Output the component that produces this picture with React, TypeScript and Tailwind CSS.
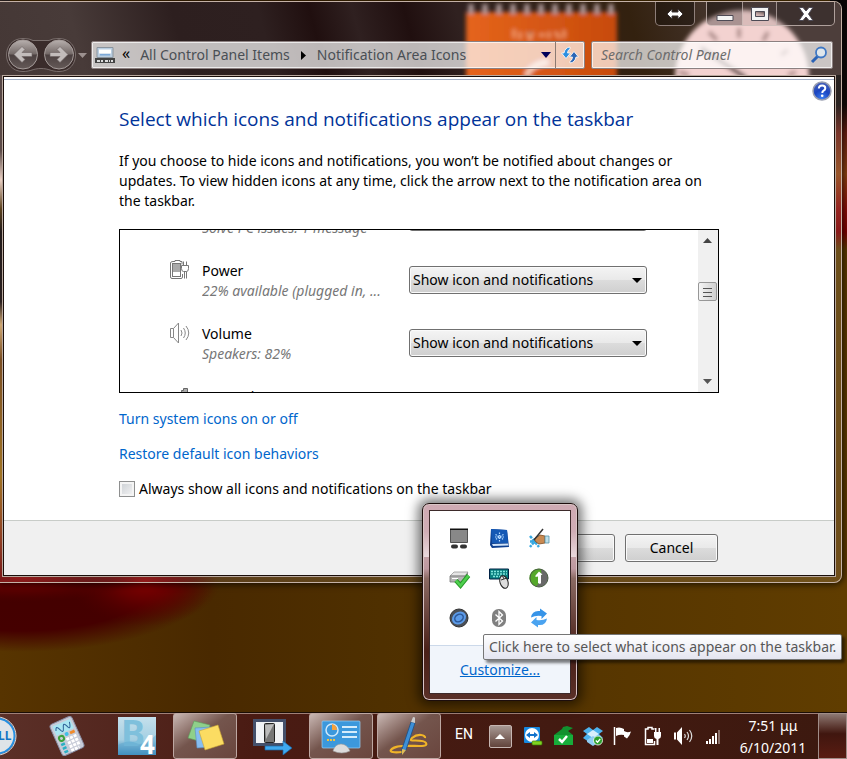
import React, { useState } from 'react'

interface IconRowProps {
    id: string
    name?: string
    status?: string
    icon?: React.ReactNode
}

const PowerIcon = () => (
    <svg width="22" height="22" viewBox="0 0 22 22" fill="none" aria-hidden="true">
        <path d="M4 2.500h2v-1h5v1h2v3M1.500 4q0-1.500 2.500-1.500M1.500 4v14q0 1.500 1.500 1.500h9q1.500 0 1.500-1.500v-3" stroke="#777" />
        <rect x="3.500" y="4.500" width="8" height="13" stroke="#777" fill="#fff" />
        <rect x="4" y="5" width="7" height="8" fill="#aaa" />
        <path d="M12.500 6.500h7v3q0 3-2 3h-3q-2 0-2-3zM14.500 6V2.500M17.500 6V2.500M15.500 12.500v7M17.500 12.500v7" stroke="#777" fill="#fff" />
    </svg>
)

const VolumeIcon = () => (
    <svg width="22" height="22" viewBox="0 0 22 22" fill="none" stroke="#888" aria-hidden="true">
        <path d="M1.500 6.500h3v9h-3zM4.500 6.500l5-5.500v20l-5-5.500" />
        <path d="M12 8q2 3 0 6M14.500 6q3.500 5 0 10M17 4q5.500 7 0 14" />
    </svg>
)

const NetworkIcon = () => (
    <svg width="22" height="22" viewBox="0 0 22 22" fill="#aaa" stroke="#666" aria-hidden="true">
        <path d="M1.500 15.500h3v5h-3zM5.500 11.500h3v9h-3zM9.500 7.500h3v13h-3zM12.500 5.500h2v-2h4v17h-4z" />
    </svg>
)

const rows: IconRowProps[] = [
    { id: 'action-center', status: 'Solve PC issues: 1 message' },
    { id: 'power', name: 'Power', status: '22% available (plugged in, ...', icon: <PowerIcon /> },
    { id: 'volume', name: 'Volume', status: 'Speakers: 82%', icon: <VolumeIcon /> },
    { id: 'network', name: 'Network', icon: <NetworkIcon /> },
]

const IconRow = ({ id, name, status, icon }: IconRowProps) => {
    return (
        <li className="flex h-[63px] shrink-0 items-start pl-[49px]">
            <div className="w-[33px] pt-2.5">{icon}</div>
            <div className="min-w-0 flex-1 pt-3 leading-5">
                <label htmlFor={id} className="block min-h-5 text-black">{name}</label>
                {status && <p className="truncate text-[#777] italic">{status}</p>}
            </div>
            <div className="relative mt-[17px] mr-[51px] w-[238px]">
                <select id={id} aria-label={name ?? status} className="h-7 w-full appearance-none rounded-[3px] border border-[#707070] bg-[linear-gradient(#f4f4f4,#e9e9e9_50%,#dcdcdc_50%,#cfcfcf)] pl-[3px] text-black shadow-[inset_0_0_0_1px_#fafafa]">
                    <option>Show icon and notifications</option>
                    <option>Hide icon and notifications</option>
                    <option>Only show notifications</option>
                </select>
                <svg className="pointer-events-none absolute top-3 right-[5px]" width="10" height="5" viewBox="0 0 10 5" aria-hidden="true">
                    <path d="M0 0h10L5 5z" fill="#000" />
                </svg>
            </div>
        </li>
    )
}

/* desktop wallpaper, it also tints the glass frame of the window */
const Wallpaper = () => (
    <svg className="pointer-events-none absolute inset-0 h-full w-full" viewBox="0 0 847 759" preserveAspectRatio="none" aria-hidden="true">
        <defs>
            <linearGradient id="ground" x1="0" y1="0" x2="1" y2="0">
                <stop offset="0" stopColor="#573400" />
                <stop offset=".25" stopColor="#492900" />
                <stop offset=".45" stopColor="#4f3000" />
                <stop offset="1" stopColor="#603d00" />
            </linearGradient>
            <linearGradient id="leftEdge" x1="0" y1="0" x2="0" y2="1">
                <stop offset="0" stopColor="#3c2e2c" />
                <stop offset=".26" stopColor="#4a3734" />
                <stop offset=".31" stopColor="#e8cbbd" />
                <stop offset=".36" stopColor="#4a2d05" />
                <stop offset=".4" stopColor="#0a0202" />
                <stop offset=".52" stopColor="#120606" />
                <stop offset=".56" stopColor="#c99d62" />
                <stop offset=".62" stopColor="#6b3a0a" />
                <stop offset=".82" stopColor="#95630b" />
                <stop offset=".93" stopColor="#83290c" />
                <stop offset="1" stopColor="#6a0000" />
            </linearGradient>
            <linearGradient id="rightEdge" x1="0" y1="0" x2="0" y2="1">
                <stop offset="0" stopColor="#0a0606" />
                <stop offset=".18" stopColor="#120a08" />
                <stop offset=".23" stopColor="#6a1e12" />
                <stop offset=".3" stopColor="#8d4312" />
                <stop offset=".36" stopColor="#8a0d08" />
                <stop offset=".4" stopColor="#7c0000" />
                <stop offset=".43" stopColor="#5c3a00" />
                <stop offset="1" stopColor="#5e3900" />
            </linearGradient>
            <radialGradient id="redGlow">
                <stop offset="0" stopColor="#850000" />
                <stop offset=".4" stopColor="#6c0000" stopOpacity=".8" />
                <stop offset="1" stopColor="#500000" stopOpacity="0" />
            </radialGradient>
            <radialGradient id="darkRed">
                <stop offset="0" stopColor="#430000" />
                <stop offset=".7" stopColor="#450000" />
                <stop offset="1" stopColor="#450000" stopOpacity="0" />
            </radialGradient>
        </defs>
        <rect width="847" height="759" fill="url(#ground)" />
        <ellipse cx="20" cy="582" rx="195" ry="70" fill="url(#darkRed)" />
        <ellipse cx="145" cy="582" rx="75" ry="44" fill="url(#redGlow)" />
        <ellipse cx="20" cy="578" rx="120" ry="24" fill="url(#redGlow)" />
        <rect width="10" height="580" fill="url(#leftEdge)" />
        <rect x="830" width="17" height="580" fill="url(#rightEdge)" />
    </svg>
)

/* blurred gadgets seen through the glass of the title bar */
const GlassBackdrop = () => (
    <svg className="pointer-events-none absolute top-0 right-0" width="842" height="73" viewBox="0 0 842 73" aria-hidden="true">
        <defs>
            <filter id="soft"><feGaussianBlur stdDeviation="2" /></filter>
            <linearGradient id="orange" x1="0" y1="0" x2="1" y2="0">
                <stop offset="0" stopColor="#e5641c" />
                <stop offset="1" stopColor="#c74a0c" />
            </linearGradient>
        </defs>
        <g filter="url(#soft)">
            <rect x="467" y="10" width="151" height="75" fill="url(#orange)" />
            <path d="M472 2v10M486 2v10M500 2v10M514 2v10M528 2v10M542 2v10M556 2v10M570 2v10M584 2v10M598 2v10M612 2v10" stroke="#b5a0a0" strokeWidth="5" />
            <path d="M527 74q6-12 22-14" stroke="#f5cdb8" strokeWidth="5" fill="none" />
            <path d="M515 27v9M521 30v7M528 30l3 7 3-7M540 33h6M550 30v6M556 30l5 6M565 28v8" stroke="#f09a6c" strokeWidth="3" />
        </g>
        <g filter="url(#soft)">
            <circle cx="743" cy="75" r="67" fill="#f3d2d0" />
            <path d="M710 30l8 8M740 26v10M769 30l-5 9M789 48l-7 5M680 70l10 3M797 70l-8 3" stroke="#a98886" strokeWidth="4" />
            <path d="M702 46l45 30" stroke="#4c3432" strokeWidth="4" />
        </g>
    </svg>
)

const WindowButtons = () => (
    <div className="relative flex h-6 justify-end gap-[11px]">
        <button type="button" aria-label="Resize" className="flex w-10 items-center justify-center rounded-b-[5px] border border-t-0 border-[#b9a9a6]/70 bg-black/30">
            <svg width="18" height="12" viewBox="0 0 18 12" aria-hidden="true">
                <path d="M1 6l5-5v3h6V1l5 5-5 5V8H6v3z" fill="#fff" stroke="#3a3334" />
            </svg>
        </button>
        <div className="flex overflow-hidden rounded-b-[5px] border border-t-0 border-[#c9b9b6]/80">
            <button type="button" aria-label="Minimize" className="flex w-[35px] items-end justify-center bg-black/30 pb-1">
                <svg width="18" height="6" viewBox="0 0 18 6" aria-hidden="true">
                    <path d="M1 .5h16v5H1z" fill="#f4f4f4" stroke="#4d4a55" />
                </svg>
            </button>
            <button type="button" aria-label="Maximize" className="flex w-[34px] items-center justify-center border-l border-[#c9b9b6]/70 bg-black/10">
                <svg width="18" height="14" viewBox="0 0 18 14" aria-hidden="true">
                    <path fillRule="evenodd" d="M.5.5h17v13H.5zM4.500 4.500v5h9v-5z" fill="#f4f4f4" stroke="#4d4a55" />
                </svg>
            </button>
            <button type="button" aria-label="Close" className="flex w-[58px] items-center justify-center border-l border-[#c9b9b6]/70 bg-black/20">
                <svg width="16" height="14" viewBox="0 0 16 14" aria-hidden="true">
                    <path d="M1 .5h4L8 4l3-3.500h4L10.500 7l4.500 6.500h-4L8 10l-3 3.500H1L5.500 7z" fill="#fff" stroke="#4d4a55" />
                </svg>
            </button>
        </div>
    </div>
)

const NavArrows = () => (
    <div className="-my-1 flex w-[91px] shrink-0 items-center pl-1.5">
        <button type="button" aria-label="Back and forward">
            <svg width="70" height="36" viewBox="0 0 70 36" aria-hidden="true">
                <defs>
                    <linearGradient id="orb" x1="0" y1="0" x2="0" y2="1">
                        <stop offset="0" stopColor="#b8b0ae" />
                        <stop offset=".48" stopColor="#746a68" />
                        <stop offset=".52" stopColor="#4b4040" />
                        <stop offset="1" stopColor="#655a58" />
                    </linearGradient>
                </defs>
                <path d="M17 1.500q7 0 10 2h16q3-2 10-2c22 0 22 33 0 33-8 0-10-3-18-3s-10 3-18 3c-22 0-22-33 0-33z" fill="#3a2c2b" stroke="#7a6f6d" />
                <circle cx="17" cy="17.500" r="14.500" fill="url(#orb)" stroke="#a59c9a" />
                <circle cx="53" cy="17.500" r="14.500" fill="url(#orb)" stroke="#a59c9a" />
                <path d="M8 17.500l8-8 3 3-3 3H26v4H16l3 3-3 3zM62 17.500l-8-8-3 3 3 3H44v4h10l-3 3 3 3z" fill="#c2bcbb" stroke="#6a605f" strokeWidth=".6" />
            </svg>
        </button>
        <svg className="ml-0.5" width="9" height="5" viewBox="0 0 9 5" aria-hidden="true">
            <path d="M0 0h9L4.500 5z" fill="#9c918f" />
        </svg>
    </div>
)

const AddressBar = () => (
    <div className="flex h-7 min-w-0 flex-1 items-stretch rounded-[2px] border border-[#8c8080] bg-white/70 text-[#4a4f55] shadow-[inset_0_0_0_1px_#ffffffb0]">
        <div className="flex min-w-0 flex-1 items-center pl-0.5">
            <svg width="22" height="18" viewBox="0 0 22 18" className="shrink-0" aria-hidden="true">
                <path d="M3 1.500h16v10H3z" fill="#b9cde0" stroke="#8a949e" />
                <path d="M5 3.500h12v4H5z" fill="#fff" />
                <path d="M6 8h10v1.500H6z" fill="#7da9d8" />
                <path d="M1 12h20v5H1z" fill="#444" />
                <path d="M3 14h3v2H3zM7 14h2v2H7zM11 14h3v2h-3zM15 14h1v2h-1zM17 14h2v2h-2z" fill="#ddd" />
            </svg>
            <span className="ml-1.5 pb-1 text-base leading-5 text-black">«</span>
            <a href="#items" className="ml-2.5 truncate">All Control Panel Items</a>
            <svg width="5" height="9" viewBox="0 0 5 9" className="mx-[11px] shrink-0" aria-hidden="true">
                <path d="M0 0l5 4.500L0 9z" fill="#000" />
            </svg>
            <a href="#icons" className="truncate">Notification Area Icons</a>
            <button type="button" aria-label="Previous locations" className="mr-1 ml-auto">
                <svg width="10" height="6" viewBox="0 0 10 6" aria-hidden="true">
                    <path d="M0 0h10L5 6z" fill="#00005a" />
                </svg>
            </button>
        </div>
        <button type="button" aria-label="Refresh" className="flex w-[29px] items-center justify-center border-l border-[#8c7a72]">
            <svg width="18" height="18" viewBox="0 0 18 18" strokeWidth=".8" stroke="#fff" aria-hidden="true">
                <path d="M9 1q-5 .5-6 6H.5L5 12.500 9.500 7H6.500Q6.500 4 9 3z" fill="#2e8fe0" />
                <path d="M9 17q5-.5 6-6h2.500L13 5.500 8.500 11h3q0 3-2.500 4z" fill="#2a66b5" />
            </svg>
        </button>
    </div>
)

const HelpButton = () => (
    <button type="button" aria-label="Help">
        <svg width="20" height="20" viewBox="0 0 20 20" aria-hidden="true">
            <defs>
                <radialGradient id="help" cx=".5" cy=".9" r=".9">
                    <stop offset="0" stopColor="#3d7ff0" />
                    <stop offset=".5" stopColor="#1a44c0" />
                    <stop offset="1" stopColor="#4a63b8" />
                </radialGradient>
            </defs>
            <circle cx="10" cy="10" r="9" fill="url(#help)" stroke="#9a9fb0" strokeWidth="1.500" />
            <path d="M6.800 7.500q.2-3 3.300-3 3.200 0 3.200 2.700 0 1.500-1.700 2.500-1.300.8-1.300 2.300" stroke="#fff" strokeWidth="2" fill="none" />
            <circle cx="10.200" cy="14.800" r="1.300" fill="#fff" />
        </svg>
    </button>
)

const ScrollBar = () => (
    <div className="flex w-5 shrink-0 flex-col items-start bg-[#f0f0f0]">
        <button type="button" aria-label="Scroll up" className="flex h-5 w-[19px] items-center justify-center">
            <svg width="9" height="5" viewBox="0 0 9 5" aria-hidden="true"><path d="M4.500 0L9 5H0z" fill="#444" /></svg>
        </button>
        <div className="mt-8 flex h-[19px] w-[19px] items-center justify-center rounded-[2px] border border-[#979797] bg-linear-to-r from-[#f5f5f5] to-[#cfcfcf]">
            <svg width="9" height="10" viewBox="0 0 9 10" aria-hidden="true"><path d="M0 1.500h9M0 5.500h9M0 9.500h9" stroke="#555" /></svg>
        </div>
        <button type="button" aria-label="Scroll down" className="mt-auto flex h-[22px] w-[19px] items-center justify-center">
            <svg width="9" height="5" viewBox="0 0 9 5" aria-hidden="true"><path d="M0 0h9L4.500 5z" fill="#555" /></svg>
        </button>
    </div>
)

/* hidden notification icons, in the order of the flyout grid */
const flyoutIcons: { label: string, art: React.ReactNode }[] = [
    {
        label: 'Touchpad',
        art: <><path d="M1.500 1.500h17v13h-17z" fill="#888" stroke="#333" strokeWidth=".8" /><path d="M1 .5h18V2H1z" fill="#111" /><rect x="2" y="16.500" width="7" height="4" rx="2" fill="#333" /><rect x="11" y="16.500" width="7" height="4" rx="2" fill="#333" /></>,
    },
    {
        label: 'Display manager',
        art: <><path d="M2 1l16 1 2 17-17 1L1 17z" fill="#0d3f8f" /><path d="M2 1l16 1 1 13H3z" fill="#1559b5" /><path d="M3 16l16-.5.5 2L4 18z" fill="#cfe2f7" /><path d="M10.500 4.500v9M6.500 6.500l8 5M14.500 6.500l-8 5M6 9h9" stroke="#b7dcff" strokeWidth="1.200" strokeDasharray="1.500 1" /></>,
    },
    {
        label: 'Handwriting',
        art: <><path d="M1 8l9 11M10 8L1 19M1 13.500h10" stroke="#36a7e0" strokeWidth="2.500" strokeDasharray="3 1" /><path d="M5 11l6-4 5 1v7l-6 1-3-2z" fill="#c98a52" stroke="#7c4a20" strokeWidth=".8" /><path d="M16 8h4v7h-4z" fill="#bfe0ea" stroke="#5793a8" strokeWidth=".8" /><path d="M5 12L14 1" stroke="#333" strokeWidth="1.500" /></>,
    },
    {
        label: 'Safely remove hardware',
        art: <><path d="M5 4h14l-3 4H1z" fill="#e5e5e5" stroke="#999" strokeWidth=".8" /><path d="M1 8h15v6H1z" fill="#b5b5b5" stroke="#777" strokeWidth=".8" /><path d="M16 8l3-4v6l-3 4z" fill="#888" /><path d="M3 10.500h6" stroke="#fff" /><path d="M7 12.500l4.500 5 8-10" fill="none" stroke="#2a9a2a" strokeWidth="4.500" /><path d="M7 12.500l4.500 5 8-10" fill="none" stroke="#4fd04f" strokeWidth="2.500" /></>,
    },
    {
        label: 'Keyboard and mouse',
        art: <><path d="M.5 1h19v10H.5z" fill="#0a7f7f" stroke="#024" /><path d="M2 3.500h16M2 6h16M4 8.500h9" stroke="#7fe6dd" strokeWidth="1.300" strokeDasharray="2 1" /><ellipse cx="15" cy="14" rx="4" ry="6.500" transform="rotate(-18 15 14)" fill="#ddd" stroke="#222" /><path d="M12 12l6-2M13.500 8l1.500 3" stroke="#333" /></>,
    },
    {
        label: 'Download manager',
        art: <><circle cx="10" cy="10" r="9" fill="#686868" /><path d="M12 1a9 9 0 1 0-5 17.500Q14 12 12 1z" fill="#55a82a" /><circle cx="10" cy="10" r="9" fill="none" stroke="#4b5f44" /><path d="M9 15V8.500L6.500 9V7.500L10 3.500l3.500 3L12 7v8l-1 1z" fill="#fff" /></>,
    },
    {
        label: 'Player',
        art: <><circle cx="10" cy="10" r="9" fill="#4a4f57" stroke="#333" /><ellipse cx="10" cy="10" rx="7.500" ry="6" transform="rotate(-35 10 10)" fill="#5c9be8" /><ellipse cx="10" cy="10" rx="4.500" ry="3.500" transform="rotate(-35 10 10)" fill="none" stroke="#2a5798" strokeWidth="1.500" /></>,
    },
    {
        label: 'Bluetooth',
        art: <><rect x="3" y="1" width="14" height="18" rx="6.500" fill="#808080" /><path d="M6.500 6.500l7 6.500-3.500 3.500v-13L13.500 7l-7 6.500" fill="none" stroke="#fff" strokeWidth="1.300" /></>,
    },
    {
        label: 'Sync',
        art: <><path d="M2 9.500Q3 2 11 3V.500l7 5-5.500 5.500V8Q7 7 2 9.500z" fill="#3794e8" /><path d="M18 10.500q-1 7.500-9 6.500v2.500l-7-5L7.500 9v3q5.500 1 10.500-1.500z" fill="#4aa3f0" /></>,
    },
]

const Flyout = () => (
    <div className="absolute bottom-full left-1/2 z-20 mb-3 w-[156px] -translate-x-1/2 rounded-[7px] border border-[#1c0d0c] bg-[linear-gradient(#cfaab3,#d0adb5_14%,#e9d9dc_27%,#c3a0a6_27%,#bd989f_33%,#8b6a63_38%,#4a2018_75%,#5a3028)] p-1.5 shadow-[0_0_12px_4px_rgba(0,0,0,0.55),inset_0_0_0_1px_#d9c5c5]">
        <div className="border border-[#3d2a2a] bg-white">
            <div className="grid grid-cols-[repeat(3,40px)] justify-center pt-[7px] pr-0.5 pb-[7px]">
                {
                    flyoutIcons.map((item) => (
                        <button key={item.label} type="button" aria-label={item.label} className="flex h-10 items-center justify-center">
                            <svg width="20" height="20" viewBox="0 0 20 20" overflow="visible" aria-hidden="true">{item.art}</svg>
                        </button>
                    ))
                }
            </div>
            <div className="flex h-12 items-center justify-center border-t border-[#ccd9ea] bg-[#f1f5fb]">
                <a href="#customize" className="text-[#0066cc] underline">Customize...</a>
            </div>
        </div>
        <div role="tooltip" className="absolute bottom-10 left-[60px] rounded-[2px] border border-[#767676] bg-linear-to-b from-white to-[#e4e5f0] px-[5px] text-[#575757] leading-6 whitespace-nowrap shadow-[3px_3px_3px_rgba(0,0,0,0.5)]">
            Click here to select what icons appear on the taskbar.
        </div>
    </div>
)

const TaskButton = ({ label, active, children }: { label: string, active?: boolean, children: React.ReactNode }) => (
    <button
        type="button"
        aria-label={label}
        className={
            active
                ? 'flex h-full w-16 shrink-0 items-center justify-center rounded-[3px] border border-[#bda7a2] bg-linear-to-br from-[#c9b8b4] from-0% via-[#74554d] via-45% to-[#6a463e] to-100%'
                : 'flex h-full w-16 shrink-0 items-center justify-center'
        }
    >
        {children}
    </button>
)

const trayIcons: { label: string, art: React.ReactNode }[] = [
    {
        label: 'TeamViewer',
        art: <><rect x="1" y="1" width="16" height="16" rx="1" fill="#1689e0" /><circle cx="9" cy="9" r="7" fill="#fff" /><path d="M3 9l4-3v2h4V6l4 3-4 3v-2H7v2z" fill="#1273cc" /><rect x="9" y="15" width="10" height="4" rx="1" fill="#7ed321" stroke="#3d7a0a" strokeWidth=".7" /></>,
    },
    {
        label: 'Backup',
        art: <><path d="M1 9l8-6 1-2 4-1 6 2-5 3 5 4v10H1z" fill="#11912f" /><path d="M1 9h19v10H1z" fill="#17ad3a" /><path d="M6 13l3 3 5-6" fill="none" stroke="#fff" strokeWidth="2.500" /></>,
    },
    {
        label: 'Dropbox',
        art: <><path d="M6 1L0 5l4 3-4 4 6 4 4-3 4 3 6-4-4-4 4-3-6-4-4 3z" fill="#4db3ee" /><path d="M10 4l6 4-6 4-6-4z" fill="#d9effc" /><path d="M4 14l6-4 6 4v2l-6 4-6-4z" fill="#8fcdf3" /><circle cx="15" cy="14.500" r="4.500" fill="#2ca02c" stroke="#fff" strokeWidth=".8" /><path d="M12.800 14.500l1.700 1.700 2.700-3.200" fill="none" stroke="#fff" strokeWidth="1.300" /></>,
    },
    {
        label: 'Action Center',
        art: <><path d="M1.500 1v18" stroke="#fff" strokeWidth="1.500" /><path d="M3 2q4-1.500 8 1v2q3 2 7 .5-1 4-4 7l-3-2V9Q7 8 3 10z" fill="#fff" /></>,
    },
    {
        label: 'Power',
        art: <><path d="M11 3.500V3H9V1.500H5V3H2.500v15.500h9V15" fill="none" stroke="#fff" strokeWidth="1.500" /><path d="M4 13h6v4H4z" fill="#fff" /><path d="M11 6h7v4q0 2.500-2.500 3v6h-2v-6Q11 12.500 11 10zM12 2h1.500v4H12zM15.500 2H17v4h-1.500z" fill="#fff" /></>,
    },
    {
        label: 'Volume',
        art: <><path d="M1 6.500h2v7H1zM4 6.500L9 1v18l-5-5.500z" fill="#fff" /><path d="M11.500 8q1.500 2 0 4M14 6q3 4 0 8M16.500 4q4.500 6 0 12" fill="none" stroke="#ddd" strokeWidth="1.200" /></>,
    },
    {
        label: 'Network',
        art: <><path d="M3 15h2v3H3zM6 13h2v5H6zM9 10h2v8H9zM12 7h2v11h-2z" fill="#fff" /><path d="M15 4h2v14h-2z" fill="#8b7069" /></>,
    },
]

const TaskBar = () => (
    <footer className="relative z-10 flex h-[47px] items-stretch border-t border-[#1a0d05] bg-linear-to-r from-[#5b3028] via-[#4a1b13] via-30% to-[#3c190f] shadow-[inset_0_1px_0_#a08078]">
        <nav aria-label="Taskbar" className="min-w-0 overflow-hidden">
            <div className="-ml-[31px] flex h-full gap-1">
                <TaskButton label="Dell Dock">
                    <svg width="40" height="40" viewBox="0 0 40 40" className="-ml-2" aria-hidden="true">
                        <circle cx="20" cy="20" r="17.500" fill="#dfe4e8" stroke="#2590e2" strokeWidth="2" />
                        <circle cx="20" cy="20" r="19" fill="none" stroke="#dfe4e8" />
                        <text x="20" y="24" textAnchor="middle" fontSize="12" fontWeight="700" fill="#1375c4">DELL</text>
                    </svg>
                </TaskButton>
                <TaskButton label="Calculator">
                    <svg width="40" height="40" viewBox="0 0 40 40" className="-ml-1" aria-hidden="true">
                        <g transform="rotate(-24 20 20)">
                            <rect x="8" y="3" width="24" height="34" rx="3" fill="#c8ccd8" stroke="#8a8fa5" />
                            <rect x="10.500" y="5.500" width="19" height="10" fill="#a9e6f2" />
                            <path d="M12 11q2-6 4 0t4 0 4 0 4-3" fill="none" stroke="#2d5f96" />
                            <circle cx="14" cy="20" r="2.500" fill="none" stroke="#3da23d" strokeWidth="2" />
                            <circle cx="20.500" cy="18" r="2" fill="#3fc0e8" />
                            <rect x="24" y="17" width="5" height="3" fill="#f08b2c" />
                            <path d="M11 26h4M11 30h4M11 34h4" stroke="#2bb0c4" strokeWidth="2.500" />
                            <path d="M18 23h11M18 27h11M18 31h11M18 35h9" stroke="#fff" strokeWidth="2.800" strokeDasharray="3 1" />
                        </g>
                    </svg>
                </TaskButton>
                <TaskButton label="BlueJ">
                    <svg width="38" height="38" viewBox="0 0 38 38" aria-hidden="true">
                        <defs>
                            <linearGradient id="b4" x1="0" y1="0" x2="0" y2="1">
                                <stop offset="0" stopColor="#c5e0ec" />
                                <stop offset=".6" stopColor="#a5cfe2" />
                                <stop offset="1" stopColor="#2377ae" />
                            </linearGradient>
                        </defs>
                        <path d="M0 0h38v38H0z" fill="url(#b4)" />
                        <text x="3" y="29" fontSize="36" fontWeight="700" fill="#7fc0dc">B</text>
                        <path d="M0 28q10-6 18-2T38 18v20H0z" fill="#5da8d0" opacity=".5" />
                        <text x="22" y="37" fontSize="26" fontWeight="700" fill="#fff">4</text>
                    </svg>
                </TaskButton>
                <TaskButton label="Sticky Notes" active>
                    <svg width="40" height="34" viewBox="0 0 40 34" aria-hidden="true">
                        <path d="M9 2l16 4-4 18-18-5z" fill="#8fd08a" stroke="#5d9c5a" strokeWidth=".6" />
                        <path d="M10 9l17-1v20l-15 1z" fill="#86bdf0" stroke="#5a8dc0" strokeWidth=".6" />
                        <path d="M14 12l19-6 6 19-19 6z" fill="#fbdc62" stroke="#c9a432" strokeWidth=".6" />
                    </svg>
                </TaskButton>
                <TaskButton label="Device Center">
                    <svg width="40" height="38" viewBox="0 0 40 38" aria-hidden="true">
                        <path d="M1.500 3.500h30v24h-30z" fill="#f1f3f6" stroke="#44506b" strokeWidth="3" />
                        <rect x="11.500" y="6.500" width="10" height="19" rx="1" fill="#777" stroke="#222" />
                        <path d="M12 8l9-1-8 15z" fill="#bbb" />
                        <path d="M12 29h18v-5l9 7-9 7v-5H12z" fill="#3fa9f0" stroke="#1764a5" strokeWidth=".7" />
                    </svg>
                </TaskButton>
                <TaskButton label="Control Panel" active>
                    <svg width="40" height="36" viewBox="0 0 40 36" aria-hidden="true">
                        <rect x="1" y="3" width="38" height="27" rx="1" fill="#3c98dc" stroke="#9bd0f5" strokeWidth=".7" />
                        <circle cx="11" cy="12" r="6" fill="none" stroke="#cfe9fb" strokeWidth="1.500" />
                        <path d="M11 12V6a6 6 0 0 1 5 6z" fill="#f5a13c" />
                        <path d="M21 9h15M21 14h15M21 19h15" stroke="#d5ecfb" strokeWidth="2" />
                        <path d="M6 22h9" stroke="#f5c23c" strokeWidth="2" strokeDasharray="2 1" />
                        <path d="M12 33q2-7 8-7t9 7q-8 4-17 0z" fill="#dcdcdc" stroke="#999" strokeWidth=".6" />
                    </svg>
                </TaskButton>
                <TaskButton label="Journal" active>
                    <svg width="42" height="42" viewBox="0 0 42 42" aria-hidden="true">
                        <path d="M14 37C-4 39 2 32 14 31s27 2 24-3-20 0-14-5 14-3 13 0" fill="none" stroke="#f0b428" strokeWidth="2.200" />
                        <path d="M23 7l4 1-9 27-4 4v-5z" fill="#3d8fd6" stroke="#1c5187" strokeWidth=".8" />
                        <path d="M23 7l2-5 2 .5V8z" fill="#ccc" />
                        <path d="M14 34l4 1-4 5z" fill="#e2bb55" />
                    </svg>
                </TaskButton>
            </div>
        </nav>
        <div className="ml-auto flex shrink-0 items-stretch text-white">
            <button type="button" className="w-9 pb-1 font-[Roboto,'Liberation_Sans',sans-serif]">EN</button>
            <div className="relative flex w-9 items-center justify-center">
                <button type="button" aria-label="Show hidden icons" className="flex h-[23px] w-[23px] items-center justify-center rounded-[2px] border border-[#c6b6b2] bg-linear-to-b from-[#a79994] to-[#62443c]">
                    <svg width="10" height="5" viewBox="0 0 10 5" aria-hidden="true"><path d="M5 0l5 5H0z" fill="#fff" /></svg>
                </button>
                <Flyout />
            </div>
            {
                trayIcons.map((item) => (
                    <button key={item.label} type="button" aria-label={item.label} className="flex w-[30px] items-center justify-center">
                        <svg width="20" height="20" viewBox="0 0 20 20" aria-hidden="true">{item.art}</svg>
                    </button>
                ))
            }
            <button type="button" className="w-[90px] pt-0.5 leading-[22px]">
                <time className="block">7:51 μμ</time>
                <time className="block">6/10/2011</time>
            </button>
            <button type="button" aria-label="Show desktop" className="w-[29px] border border-[#a08d88] bg-linear-to-b from-[#8d7973] from-0% via-[#40160f] via-45% to-[#5a1c12] to-100%" />
        </div>
    </footer>
)

const App = () => {
    const [alwaysShow, setAlwaysShow] = useState(false)

    return (
        <div className="relative flex min-h-screen flex-col overflow-hidden bg-black font-['Noto_Sans','Open_Sans',sans-serif] text-sm">
            <Wallpaper />
            <div className="relative mt-px mr-[5px] rounded-r-[8px] border border-l-0 border-[#c4b1a6] bg-white/10 shadow-[0_0_6px_2px_rgba(0,0,0,0.6)]">
                <header className="relative overflow-hidden rounded-tr-[7px] bg-[linear-gradient(75deg,#453836,#483b39_10%,#2d1f1f_22%,#2e2020_32%,#200f0f_38%,#2f2020_43%,#200f0f_49%,#302120_55%,#33210f_75%,#4d3e3b_90%)]">
                    <GlassBackdrop />
                    <div className="pr-1.5">
                        <WindowButtons />
                    </div>
                    <div className="relative mt-[15px] mb-1.5 flex items-center pr-2">
                        <NavArrows />
                        <AddressBar />
                        <form className="ml-1.5 flex h-7 w-[242px] shrink-0 items-center rounded-[2px] border border-[#8c8080] bg-white/70 pr-1 pl-[9px] shadow-[inset_0_0_0_1px_#ffffffb0]">
                            <input type="search" aria-label="Search Control Panel" placeholder="Search Control Panel" className="min-w-0 flex-1 italic outline-none placeholder:text-[#6d6d6d]" />
                            <button type="submit" aria-label="Search">
                                <svg width="18" height="18" viewBox="0 0 18 18" fill="none" aria-hidden="true">
                                    <path d="M8 10l-6 6" stroke="#2a62b5" strokeWidth="3" />
                                    <circle cx="11" cy="6.500" r="5" fill="#e8f4fc" fillOpacity=".7" stroke="#3f78c4" strokeWidth="1.800" />
                                </svg>
                            </button>
                        </form>
                    </div>
                </header>

                <div className="mr-[5px] mb-[5px] ml-0.5 border border-[#b9a99f]">
                    <main className="border border-[#1a0e0a] bg-white pt-0.5 text-black">
                        <div className="flex justify-end border-t border-[#a3b0c6] pt-px pr-0.5">
                            <HelpButton />
                        </div>
                        <div className="px-[115px] pb-[21px]">
                            <h1 className="mt-1 font-['Open_Sans','Noto_Sans',sans-serif] text-[19px] leading-7 text-[#003399]">Select which icons and notifications appear on the taskbar</h1>
                            <p className="mt-[18px] leading-5">
                                If you choose to hide icons and notifications, you won’t be notified about changes or updates. To view hidden icons at any time, click the arrow next to the notification area on the taskbar.
                            </p>
                            <div className="mt-[18px] flex h-[164px] border border-black">
                                <div className="min-w-0 flex-1 overflow-hidden">
                                    <ul className="-mt-11 flex flex-col">
                                        {rows.map((row) => <IconRow key={row.id} {...row} />)}
                                    </ul>
                                </div>
                                <ScrollBar />
                            </div>
                            <div className="mt-4 flex flex-col items-start gap-[15px] leading-5">
                                <a href="#system-icons" className="text-[#0066cc]">Turn system icons on or off</a>
                                <a href="#restore" className="text-[#0066cc]">Restore default icon behaviors</a>
                                <label className="flex items-center gap-1">
                                    <input
                                        type="checkbox"
                                        checked={alwaysShow}
                                        onChange={(e) => setAlwaysShow(e.target.checked)}
                                        className="h-4 w-4 appearance-none border border-[#8e8f8f] bg-linear-to-br from-[#c9cdd2] to-[#f6f6f6] shadow-[inset_0_0_0_2px_#f4f4f4] checked:bg-[#4b6ea9]"
                                    />
                                    Always show all icons and notifications on the taskbar
                                </label>
                            </div>
                        </div>
                        <div className="flex h-[55px] items-center justify-end gap-2.5 border-t border-[#c8ccc8] bg-[#f0f0f0] px-[116px]">
                            <button type="button" className="h-7 w-[93px] rounded-[3px] border border-[#707070] bg-[linear-gradient(#f4f4f4,#e9e9e9_50%,#dcdcdc_50%,#cfcfcf)] pr-1 shadow-[inset_0_0_0_1px_#fafafa]">OK</button>
                            <button type="button" className="h-7 w-[93px] rounded-[3px] border border-[#707070] bg-[linear-gradient(#f4f4f4,#e9e9e9_50%,#dcdcdc_50%,#cfcfcf)] shadow-[inset_0_0_0_1px_#fafafa]">Cancel</button>
                        </div>
                    </main>
                </div>
            </div>
            <div className="mt-auto">
                <TaskBar />
            </div>
        </div>
    )
}

export default App
